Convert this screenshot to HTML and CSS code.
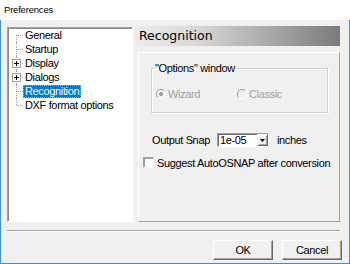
FILE: index.html
```html
<!DOCTYPE html>
<html lang="en">
<head>
    <meta charset="UTF-8">
    <meta name="viewport" content="width=device-width, initial-scale=1.0">
    <title>Preferences</title>
    <link rel="stylesheet" href="styles.css">
</head>
<body>
    <div class="window">
        <div class="titlebar">Preferences</div>

        <div class="dialog">
            <div class="main">
                <ul class="tree">
                    <li class="node first"><span class="twig"></span><span class="label">General</span></li>
                    <li class="node"><span class="twig"></span><span class="label">Startup</span></li>
                    <li class="node"><span class="twig"><span class="expander"></span></span><span class="label">Display</span></li>
                    <li class="node"><span class="twig"><span class="expander"></span></span><span class="label">Dialogs</span></li>
                    <li class="node"><span class="twig"></span><span class="label selected">Recognition</span></li>
                    <li class="node last"><span class="twig"></span><span class="label">DXF format options</span></li>
                </ul>

                <div class="page">
                    <div class="page-title">Recognition</div>
                    <div class="page-body">
                        <fieldset class="group">
                            <legend>"Options" window</legend>
                            <div class="radios">
                                <div class="radio checked"><span class="dot"></span>Wizard</div>
                                <div class="radio"><span class="dot"></span>Classic</div>
                            </div>
                        </fieldset>

                        <div class="snap-row">
                            <span class="snap-label">Output Snap</span>
                            <div class="combo">
                                <span class="combo-value">1e-05</span>
                                <span class="combo-btn">
                                    <svg width="5" height="3" viewBox="0 0 5 3"><path d="M0 0h5L2.5 3z" fill="#000"/></svg>
                                </span>
                            </div>
                            <span>inches</span>
                        </div>

                        <div class="check-row"><span class="checkbox"></span>Suggest AutoOSNAP after conversion</div>
                    </div>
                </div>
            </div>

            <div class="separator"></div>

            <div class="buttons">
                <button class="btn">OK</button>
                <button class="btn">Cancel</button>
            </div>
        </div>
    </div>
</body>
</html>
```

FILE: styles.css
```css
body {
    margin: 0;
    background-color: #fff;
}
.window {
    width: 350px;
    height: 264px;
    font-family: "Liberation Sans", Arial, sans-serif;
    font-size: 11px;
    letter-spacing: -0.35px;
    color: #000;
}
.titlebar {
    height: 20px;
    line-height: 20px;
    padding-left: 4px;
    font-size: 9.5px;
    letter-spacing: -0.2px;
    background-color: #fff;
}
.dialog {
    box-sizing: border-box;
    height: 244px;
    background-color: #f0f0f0;
    border: 1px solid #3c8ee0;
    border-top: none;
}
.main {
    display: flex;
    align-items: flex-start;
    padding: 6px 0 0 6px;
}

/* tree view */
.tree {
    box-sizing: border-box;
    width: 126px;
    height: 195px;
    margin: 1px 0 0 0;
    padding: 0;
    list-style: none;
    background-color: #fff;
    border: 1px solid;
    border-color: #a0a0a0 #fff #fff #a0a0a0;
    box-shadow: inset 1px 1px 0 #8a8a8a;
}
.node {
    display: flex;
    align-items: center;
    height: 14px;
}
.twig {
    position: relative;
    width: 15px;
    height: 14px;
    flex: none;
}
.twig::before {
    content: "";
    position: absolute;
    left: 8px;
    top: 0;
    bottom: 0;
    border-left: 1px dotted #a0a0a0;
}
.first .twig::before {
    top: 7px;
}
.last .twig::before {
    bottom: 7px;
}
.twig::after {
    content: "";
    position: absolute;
    left: 9px;
    width: 6px;
    top: 7px;
    border-top: 1px dotted #a0a0a0;
}
.expander {
    position: absolute;
    z-index: 1;
    left: 4px;
    top: 3px;
    box-sizing: border-box;
    width: 9px;
    height: 9px;
    background:
        linear-gradient(#000, #000) center / 5px 1px no-repeat,
        linear-gradient(#000, #000) center / 1px 5px no-repeat,
        #fff;
    border: 1px solid #a0a0a0;
}
.label {
    height: 13px;
    line-height: 13px;
    padding: 0 2px;
}
.label.selected {
    color: #fff;
    background-color: #0078d7;
    outline: 1px dotted #e0a060;
    outline-offset: -1px;
}

/* right page */
.page {
    width: 205px;
    margin-left: 2px;
}
.page-title {
    height: 20px;
    line-height: 20px;
    padding-left: 4px;
    font-family: "DejaVu Sans", Verdana, sans-serif;
    font-size: 12.5px;
    letter-spacing: 0;
    background: linear-gradient(to right, #ececec, #d8d8d8 30%, #7b7b7b);
}
.page-body {
    box-sizing: border-box;
    width: 202px;
    height: 170px;
    margin: 6px 0 0 3px;
    border: 1px solid;
    border-color: #fff #a0a0a0 #a0a0a0 #fff;
}
.group {
    margin: 9px 11px 0 12px;
    padding: 0 0 12px 2px;
    border: 1px solid #d0d0d0;
    box-shadow: 1px 1px 0 #fff, inset 1px 1px 0 #fff;
}
.group legend {
    padding: 0 1px;
    line-height: 13px;
}
.radios {
    display: flex;
    margin-top: 12px;
    height: 13px;
}
.radio {
    display: flex;
    align-items: center;
    gap: 2px;
    width: 81px;
    margin-left: 2px;
    color: #a0a0a0;
}
.radio + .radio {
    margin-left: 0;
}
.dot {
    box-sizing: border-box;
    width: 10px;
    height: 10px;
    border-radius: 50%;
    border: 1px solid;
    border-color: #a0a0a0 #fff #fff #a0a0a0;
    background-color: #f0f0f0;
}
.radio.checked .dot {
    background: radial-gradient(circle, #a0a0a0 0 1.6px, #f0f0f0 2.2px);
}
.snap-row {
    display: flex;
    align-items: center;
    height: 14px;
    margin: 20px 0 0 13px;
}
.snap-label {
    width: 65px;
}
.combo {
    box-sizing: border-box;
    display: flex;
    width: 52px;
    height: 14px;
    margin-right: 8px;
    background-color: #fff;
    border: 1px solid;
    border-color: #a0a0a0 #fff #fff #a0a0a0;
    box-shadow: inset 1px 1px 0 #696969;
}
.combo-value {
    flex: 1;
    line-height: 12px;
    padding-left: 2px;
}
.combo-btn {
    box-sizing: border-box;
    display: flex;
    align-items: center;
    justify-content: center;
    width: 11px;
    height: 12px;
    background-color: #f0f0f0;
    border: 1px solid;
    border-color: #f0f0f0 #696969 #696969 #f0f0f0;
    box-shadow: inset 1px 1px 0 #fff, inset -1px -1px 0 #a0a0a0;
}
.check-row {
    display: flex;
    align-items: center;
    gap: 3px;
    height: 13px;
    margin: 9px 0 0 4px;
}
.checkbox {
    box-sizing: border-box;
    width: 11px;
    height: 11px;
    background-color: #fff;
    border: 1px solid;
    border-color: #a0a0a0 #fff #fff #a0a0a0;
    box-shadow: inset 1px 1px 0 #a0a0a0;
}

/* bottom */
.separator {
    height: 1px;
    margin: 8px 9px 0 6px;
    background-color: #a0a0a0;
    border-bottom: 1px solid #fff;
}
.buttons {
    display: flex;
    justify-content: flex-end;
    gap: 9px;
    margin-top: 8px;
    padding-right: 7px;
}
.btn {
    box-sizing: border-box;
    width: 60px;
    height: 20px;
    padding: 0;
    font: inherit;
    letter-spacing: inherit;
    color: #000;
    background-color: #f0f0f0;
    border: 1px solid;
    border-color: #fff #696969 #696969 #fff;
    box-shadow: inset -1px -1px 0 #a0a0a0;
}
```
